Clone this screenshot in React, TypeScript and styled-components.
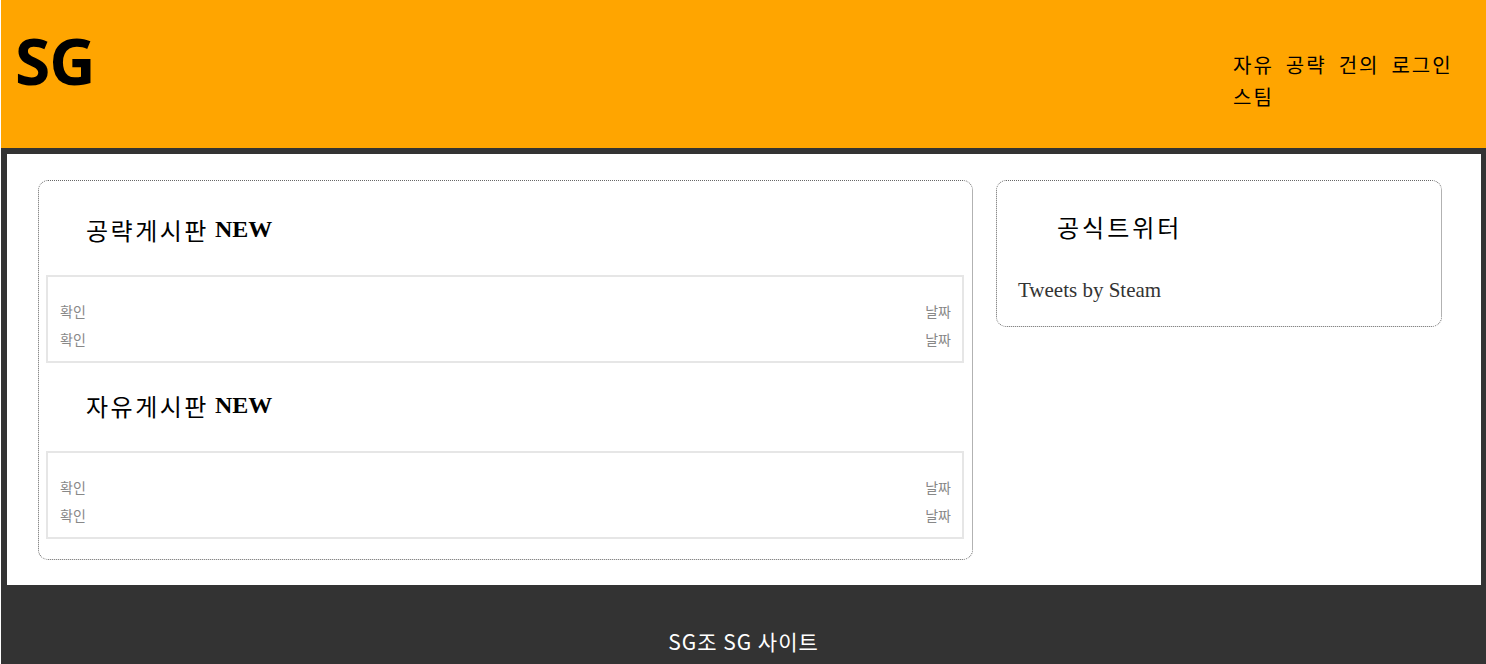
import React from "react";
import styled, { createGlobalStyle } from "styled-components";

const GlobalStyle = createGlobalStyle`
  html, body {
    margin: 0;
    padding: 0;
    background: #ffffff;
  }
  body {
    padding-left: 1px;
    font-family: "Noto Sans CJK KR", "Noto Sans", sans-serif;
  }
`;

const Header = styled.header`
  height: 148px;
  background: #ffa500;
  display: flex;
  justify-content: space-between;
  align-items: flex-start;
  padding: 0 13px 0 14px;
  box-sizing: border-box;
`;

const Logo = styled.h1`
  margin: 29px 0 0 0;
  font-family: "Open Sans", "Noto Sans", sans-serif;
  font-weight: 700;
  font-size: 64px;
  line-height: 64px;
  color: #000;
  letter-spacing: -1px;
`;

const Nav = styled.nav`
  width: 240px;
  margin-top: 49px;
  display: flex;
  flex-wrap: wrap;
  column-gap: 12px;
`;

const NavItem = styled.a`
  font-family: "Noto Sans CJK KR", sans-serif;
  font-size: 20px;
  letter-spacing: 2px;
  line-height: 32px;
  color: #000;
  text-decoration: none;
`;

const Main = styled.main`
  border: solid #333333;
  border-width: 6px 5px 0 6px;
  background: #ffffff;
  padding: 26px 39px 25px 31px;
  display: grid;
  grid-template-columns: minmax(0, 935fr) minmax(0, 446fr);
  column-gap: 23px;
  align-items: start;
`;

const Card = styled.section`
  border: 1px dotted #666666;
  border-radius: 10px;
  box-sizing: border-box;
`;

const BoardCard = styled(Card)`
  padding: 6px 8px 20px 7px;
`;

const BoardTitle = styled.h2`
  margin: 0;
  height: 88px;
  box-sizing: border-box;
  padding: 0 0 4px 40px;
  display: flex;
  align-items: center;
  font-family: "Liberation Serif", "Noto Sans CJK KR", serif;
  font-size: 24px;
  font-weight: 400;
  color: #000;
`;

const BoardName = styled.span`
  letter-spacing: 2.5px;
`;

const NewTag = styled.strong`
  font-weight: 700;
  margin-left: 6px;
`;

const ListBox = styled.ul`
  list-style: none;
  margin: 0;
  border: 2px solid #e6e6e6;
  padding: 20px 11px 8px 12px;
`;

const ListRow = styled.li`
  display: flex;
  justify-content: space-between;
  font-family: "Noto Sans CJK KR", sans-serif;
  font-size: 14px;
  line-height: 28px;
  color: #888888;
`;

const TwitterCard = styled(Card)`
  padding: 32px 22px 24px 21px;
`;

const TwitterTitle = styled.h2`
  margin: 0 0 37px 0;
  padding-left: 39px;
  font-family: "Noto Sans CJK KR", sans-serif;
  font-weight: 400;
  font-size: 24px;
  letter-spacing: 3px;
  line-height: 28px;
  color: #000;
`;

const TweetLink = styled.a`
  display: block;
  font-family: "Liberation Serif", serif;
  font-size: 21px;
  line-height: 24px;
  color: #333333;
  text-decoration: none;
`;

const Footer = styled.footer`
  background: #333333;
  padding: 44px 0 40px;
  text-align: center;
  font-family: "Noto Sans CJK KR", sans-serif;
  font-size: 21px;
  letter-spacing: 1px;
  line-height: 24px;
  color: #ffffff;
`;

const rows = [
  { title: "확인", date: "날짜" },
  { title: "확인", date: "날짜" },
];

const Board: React.FC<{ name: string }> = ({ name }) => (
  <>
    <BoardTitle>
      <BoardName>{name}</BoardName>
      <NewTag>NEW</NewTag>
    </BoardTitle>
    <ListBox>
      {rows.map((r, i) => (
        <ListRow key={i}>
          <span>{r.title}</span>
          <span>{r.date}</span>
        </ListRow>
      ))}
    </ListBox>
  </>
);

export default function App() {
  return (
    <>
      <GlobalStyle />
      <Header>
        <Logo>SG</Logo>
        <Nav>
          <NavItem href="#">자유</NavItem>
          <NavItem href="#">공략</NavItem>
          <NavItem href="#">건의</NavItem>
          <NavItem href="#">로그인</NavItem>
          <NavItem href="#">스팀</NavItem>
        </Nav>
      </Header>
      <Main>
        <BoardCard>
          <Board name="공략게시판" />
          <Board name="자유게시판" />
        </BoardCard>
        <TwitterCard>
          <TwitterTitle>공식트위터</TwitterTitle>
          <TweetLink href="#">Tweets by Steam</TweetLink>
        </TwitterCard>
      </Main>
      <Footer>SG조 SG 사이트</Footer>
    </>
  );
}
